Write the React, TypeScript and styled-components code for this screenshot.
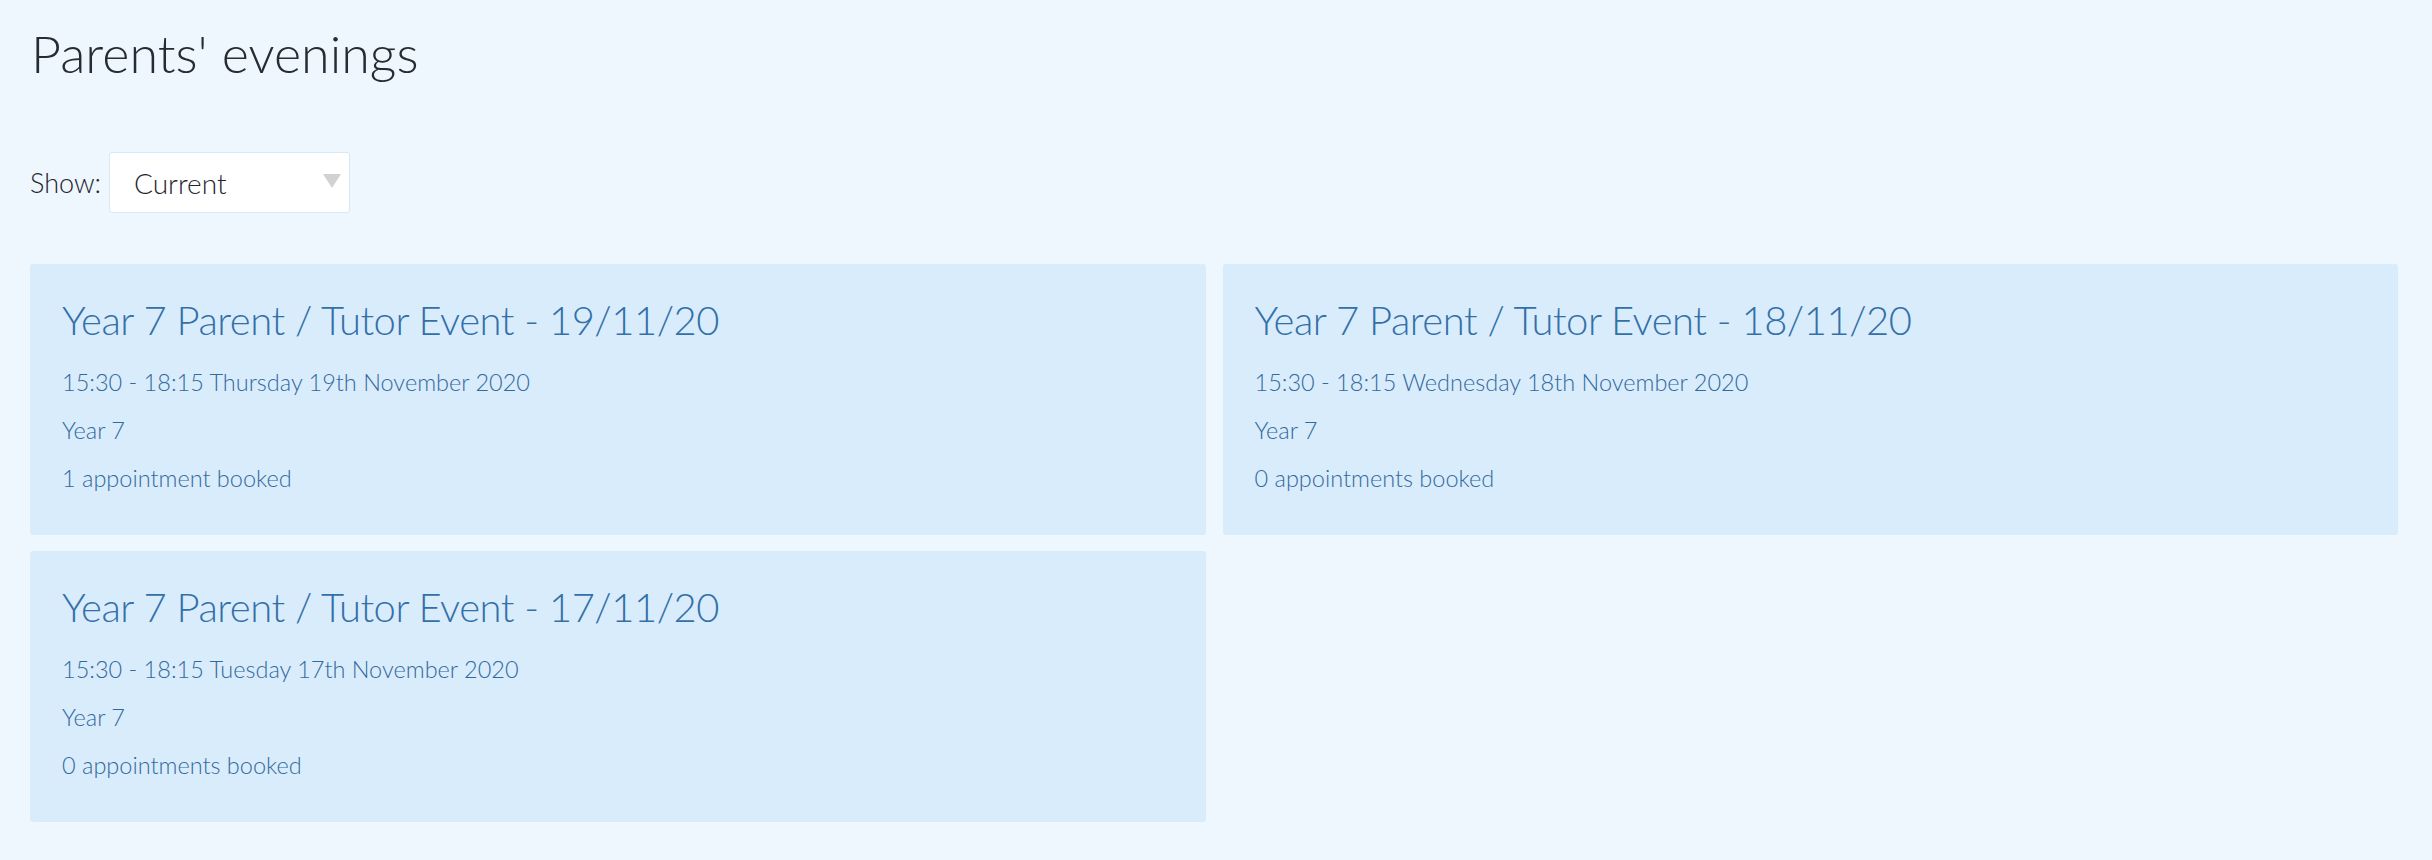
import React, { useState } from "react";
import styled, { createGlobalStyle } from "styled-components";

const events = [
  {
    id: 1,
    title: "Year 7 Parent / Tutor Event - 19/11/20",
    when: "15:30 - 18:15 Thursday 19th November 2020",
    group: "Year 7",
    booked: "1 appointment booked",
  },
  {
    id: 2,
    title: "Year 7 Parent / Tutor Event - 18/11/20",
    when: "15:30 - 18:15 Wednesday 18th November 2020",
    group: "Year 7",
    booked: "0 appointments booked",
  },
  {
    id: 3,
    title: "Year 7 Parent / Tutor Event - 17/11/20",
    when: "15:30 - 18:15 Tuesday 17th November 2020",
    group: "Year 7",
    booked: "0 appointments booked",
  },
];

const GlobalStyle = createGlobalStyle`
  html, body {
    margin: 0;
    padding: 0;
    background: #eef6fe;
    font-family: Lato, "Open Sans", sans-serif;
  }
`;

const App = () => {
  const [filter, setFilter] = useState("current");

  return (
    <Page>
      <GlobalStyle />
      <Title>Parents' evenings</Title>
      <FilterRow>
        <FilterLabel>Show:</FilterLabel>
        <SelectWrap>
          <Select value={filter} onChange={(e) => setFilter(e.target.value)}>
            <option value="current">Current</option>
            <option value="past">Past</option>
          </Select>
          <Arrow />
        </SelectWrap>
      </FilterRow>
      <Grid>
        {events.map((ev) => (
          <Card key={ev.id}>
            <CardTitle>{ev.title}</CardTitle>
            <CardLine>{ev.when}</CardLine>
            <CardLine>{ev.group}</CardLine>
            <CardLine>{ev.booked}</CardLine>
          </Card>
        ))}
      </Grid>
    </Page>
  );
};

export default App;

// styles

const Page = styled.div`
  padding: 20px 34px 30px 30px;
  min-height: 860px;
  box-sizing: border-box;
`;

const Title = styled.h1`
  margin: 0 0 0 1px;
  font-weight: 300;
  font-size: 52px;
  line-height: 66px;
  color: #262c31;
`;

const FilterRow = styled.div`
  display: flex;
  align-items: center;
  gap: 8px;
  margin-top: 66px;
`;

const FilterLabel = styled.span`
  font-size: 27px;
  font-weight: 300;
  color: #1f252a;
`;

const SelectWrap = styled.div`
  position: relative;
  width: 241px;
  height: 61px;
`;

const Select = styled.select`
  appearance: none;
  width: 100%;
  height: 100%;
  box-sizing: border-box;
  background: #fff;
  border: 1px solid #d9e8f5;
  border-radius: 3px;
  padding: 0 40px 0 24px;
  font-family: Lato, "Open Sans", sans-serif;
  font-size: 28px;
  font-weight: 300;
  color: #1f252a;
  outline: none;
`;

const Arrow = styled.span`
  position: absolute;
  right: 9px;
  top: 22px;
  width: 0;
  height: 0;
  border-left: 9px solid transparent;
  border-right: 9px solid transparent;
  border-top: 14px solid #d2d2d2;
  pointer-events: none;
`;

const Grid = styled.div`
  display: grid;
  grid-template-columns: 1fr 1fr;
  gap: 16px 17px;
  margin-top: 51px;
`;

const Card = styled.div`
  background: #d9ecfc;
  border-radius: 3px;
  padding: 31px 32px 33px;
  min-height: 271px;
  box-sizing: border-box;
`;

const CardTitle = styled.h2`
  margin: 0 0 13px;
  font-size: 40px;
  font-weight: 300;
  line-height: 50px;
  letter-spacing: -0.5px;
  color: #3470a8;
`;

const CardLine = styled.p`
  margin: 0;
  font-size: 23.5px;
  font-weight: 300;
  line-height: 48px;
  color: #336a9d;
`;
